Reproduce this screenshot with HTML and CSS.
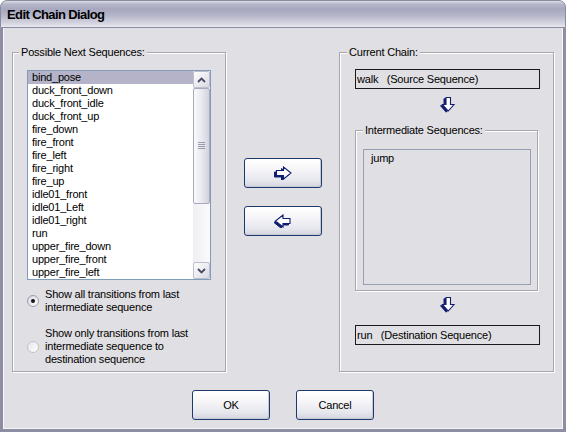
FILE: index.html
```html
<!DOCTYPE html>
<html>
<head>
<meta charset="utf-8">
<link rel="stylesheet" href="styles.css">
</head>
<body>
<div class="window">
  <div class="titlebar"><span class="title">Edit Chain Dialog</span></div>
  <div class="frame">
    <div class="main">
      <div class="group group-left">
        <div class="legend">Possible Next Sequences:</div>
        <div class="listbox">
          <ul class="items">
            <li class="sel">bind_pose</li>
            <li>duck_front_down</li>
            <li>duck_front_idle</li>
            <li>duck_front_up</li>
            <li>fire_down</li>
            <li>fire_front</li>
            <li>fire_left</li>
            <li>fire_right</li>
            <li>fire_up</li>
            <li>idle01_front</li>
            <li>idle01_Left</li>
            <li>idle01_right</li>
            <li>run</li>
            <li>upper_fire_down</li>
            <li>upper_fire_front</li>
            <li>upper_fire_left</li>
          </ul>
          <div class="scrollbar">
            <div class="sb-btn"><svg width="9" height="6" viewBox="0 0 9 6"><polyline points="1,5 4.5,1.5 8,5" fill="none" stroke="#4a4a66" stroke-width="1.8"/></svg></div>
            <div class="sb-track">
              <div class="sb-thumb"><svg width="7" height="8" viewBox="0 0 7 8"><path d="M0 0.5H7M0 2.5H7M0 4.5H7M0 6.5H7" stroke="#9a9aae" stroke-width="1"/></svg></div>
            </div>
            <div class="sb-btn"><svg width="9" height="6" viewBox="0 0 9 6"><polyline points="1,1 4.5,4.5 8,1" fill="none" stroke="#4a4a66" stroke-width="1.8"/></svg></div>
          </div>
        </div>
        <div class="option option-1"><span class="radio checked"></span><span class="option-text">Show all transitions from last<br>intermediate sequence</span></div>
        <div class="option option-2"><span class="radio"></span><span class="option-text">Show only transitions from last<br>intermediate sequence to<br>destination sequence</span></div>
      </div>
      <div class="mid">
        <button class="btn"><svg width="20" height="14" viewBox="0 0 20 14"><polygon points="3.5,4.5 10.5,4.5 10.5,1 18,7 10.5,13 10.5,9.5 3.5,9.5" fill="#101e70" stroke="#101e70" stroke-width="1" transform="translate(-2,1.5)"/><polygon points="3.5,4.5 10.5,4.5 10.5,1 18,7 10.5,13 10.5,9.5 3.5,9.5" fill="#fff" stroke="#101e70" stroke-width="1.1"/></svg></button>
        <button class="btn"><svg width="20" height="14" viewBox="0 0 20 14"><polygon points="17,4.5 10,4.5 10,1 2.5,7 10,13 10,9.5 17,9.5" fill="#101e70" stroke="#101e70" stroke-width="1" transform="translate(-1.5,1.5)"/><polygon points="17,4.5 10,4.5 10,1 2.5,7 10,13 10,9.5 17,9.5" fill="#fff" stroke="#101e70" stroke-width="1.1"/></svg></button>
      </div>
      <div class="group group-right">
        <div class="legend">Current Chain:</div>
        <div class="seqbox seq-src">walk   (Source Sequence)</div>
        <div class="down down-1"><svg width="15" height="16" viewBox="0 0 15 16"><polygon points="6,0.5 10.5,0.5 10.5,7.5 14,7.5 8.25,14 2.5,7.5 6,7.5" fill="#101e70" stroke="#101e70" stroke-width="1" transform="translate(-2,1.2)"/><polygon points="6,0.5 10.5,0.5 10.5,7.5 14,7.5 8.25,14 2.5,7.5 6,7.5" fill="#fff" stroke="#101e70" stroke-width="1.1"/></svg></div>
        <div class="group inner-group">
          <div class="legend">Intermediate Sequences:</div>
          <div class="inter-list"><div class="inter-item">jump</div></div>
        </div>
        <div class="down down-2"><svg width="15" height="16" viewBox="0 0 15 16"><polygon points="6,0.5 10.5,0.5 10.5,7.5 14,7.5 8.25,14 2.5,7.5 6,7.5" fill="#101e70" stroke="#101e70" stroke-width="1" transform="translate(-2,1.2)"/><polygon points="6,0.5 10.5,0.5 10.5,7.5 14,7.5 8.25,14 2.5,7.5 6,7.5" fill="#fff" stroke="#101e70" stroke-width="1.1"/></svg></div>
        <div class="seqbox seq-dst">run   (Destination Sequence)</div>
      </div>
    </div>
    <div class="footer">
      <button class="btn">OK</button>
      <button class="btn">Cancel</button>
    </div>
  </div>
</div>
</body>
</html>
```

FILE: styles.css
```css
* { box-sizing: border-box; }
html, body { margin: 0; padding: 0; background: #ffffff; }
body {
  font-family: "Liberation Sans", Arial, sans-serif;
  font-size: 11px;
  letter-spacing: -0.2px;
  color: #000;
}
.window {
  width: 566px;
  height: 432px;
  display: flex;
  flex-direction: column;
}
.titlebar {
  height: 28px;
  flex: none;
  border: 1px solid #8a8aa0;
  border-radius: 7px 7px 0 0;
  background: linear-gradient(180deg, #dedee8 0px, #b7b7ca 3px, #a7a8bf 8px, #b3b4c8 14px, #cfcfdc 21px, #e8e8f0 26px);
  display: flex;
  align-items: center;
  padding: 1px 0 0 6px;
}
.title {
  font-weight: bold;
  font-size: 13px;
  letter-spacing: -0.6px;
  color: #000;
}
.frame {
  flex: 1;
  display: flex;
  flex-direction: column;
  background: #e0dfe3;
  border: 3px solid #8d8da3;
  border-top: 0;
  box-shadow: inset 1px 0 0 #f7f7f9, inset -1px 0 0 #f7f7f9, inset 0 -1px 0 #f7f7f9;
}
.main {
  display: flex;
  align-items: flex-start;
  padding: 24px 9px 0;
}
.group {
  border: 1px solid #a7a7ae;
  box-shadow: inset 1px 1px 0 #ffffff, 1px 1px 0 #ffffff;
}
.legend {
  width: fit-content;
  margin: -7px 0 0 -8px;
  padding: 0 2px;
  line-height: 13px;
  background: #e0dfe3;
  white-space: nowrap;
}
.group-left {
  width: 214px;
  height: 320px;
  padding-left: 14px;
}
.listbox {
  margin-top: 11px;
  width: 184px;
  height: 210px;
  border: 1px solid #7f9db9;
  background: #ffffff;
  display: flex;
}
.items {
  list-style: none;
  margin: 0;
  padding: 0;
  flex: 1;
}
.items li {
  height: 13px;
  line-height: 13px;
  padding-left: 4px;
  white-space: nowrap;
}
.items li.sel { background: #b4b3c8; }
.scrollbar {
  width: 17px;
  display: flex;
  flex-direction: column;
  background: linear-gradient(90deg, #efeff3, #fbfbfc);
}
.sb-btn {
  height: 17px;
  flex: none;
  border: 1px solid #bdbdcc;
  border-radius: 2px;
  background: linear-gradient(135deg, #ffffff, #d8d8e3);
  display: flex;
  align-items: center;
  justify-content: center;
}
.sb-track {
  flex: 1;
  display: flex;
  flex-direction: column;
}
.sb-thumb {
  height: 116px;
  border: 1px solid #a9aabc;
  border-radius: 2px;
  background: linear-gradient(90deg, #fafafc, #e7e7ef 55%, #d2d2de);
  display: flex;
  align-items: center;
  justify-content: center;
}
.option {
  display: flex;
  align-items: center;
  gap: 6px;
  line-height: 13px;
}
.option-1 { margin-top: 8px; }
.option-2 { margin-top: 13px; }
.radio {
  width: 12px;
  height: 12px;
  flex: none;
  border-radius: 50%;
  border: 1px solid #9c9cae;
  background: linear-gradient(135deg, #d6d6e0, #ffffff);
  display: flex;
  align-items: center;
  justify-content: center;
}
.option-2 .radio { border-color: #c2c2ce; background: linear-gradient(135deg, #e6e6ec, #ffffff); }
.radio.checked::after {
  content: "";
  width: 4px;
  height: 4px;
  border-radius: 50%;
  background: #151515;
}
.mid {
  width: 78px;
  margin: 0 17px 0 18px;
  padding-top: 106px;
  display: flex;
  flex-direction: column;
  gap: 18px;
}
.btn {
  width: 78px;
  height: 30px;
  padding: 0;
  border: 1px solid #1d3a6e;
  border-radius: 3px;
  background: linear-gradient(180deg, #ffffff 0%, #f5f5f8 40%, #e4e4ec 80%, #d3d3df 100%);
  box-shadow: inset -1px -1px 0 #c9c9d6;
  font-family: "Liberation Sans", Arial, sans-serif;
  font-size: 11px;
  letter-spacing: -0.2px;
  color: #000;
  display: flex;
  align-items: center;
  justify-content: center;
}
.group-right {
  width: 215px;
  height: 320px;
  padding-left: 15px;
}
.seqbox {
  width: 185px;
  height: 20px;
  border: 1px solid #1a1a1a;
  line-height: 18px;
  padding-left: 1px;
  white-space: pre;
}
.seq-src { margin-top: 10px; }
.seq-dst { margin-top: 12px; }
.down {
  width: 185px;
  height: 16px;
  display: flex;
  justify-content: center;
}
.down-1 { margin-top: 8px; }
.down-2 { margin-top: 6px; }
.inner-group {
  width: 183px;
  height: 161px;
  margin-top: 17px;
  padding-left: 7px;
}
.inner-group .legend { margin-left: 0; }
.inter-list {
  margin-top: 12px;
  width: 168px;
  height: 136px;
  border: 1px solid #949fb2;
  padding: 2px 0 0 7px;
  line-height: 13px;
}
.footer {
  display: flex;
  justify-content: center;
  gap: 26px;
  margin-top: 18px;
}
```
